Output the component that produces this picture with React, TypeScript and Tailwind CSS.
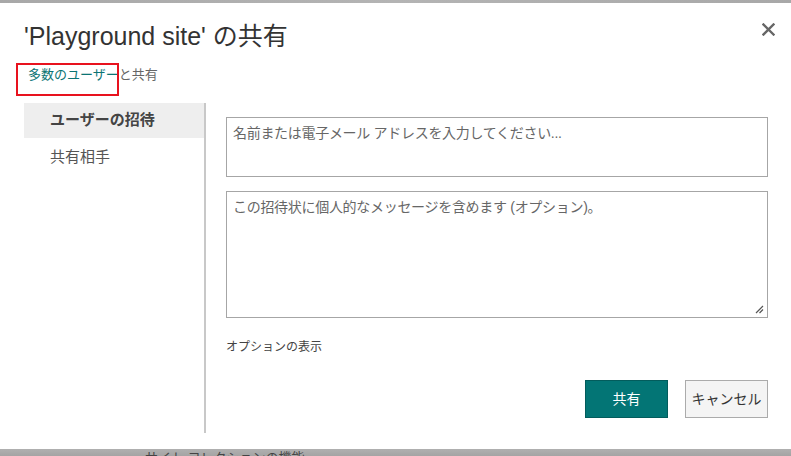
import React from 'react';

const font = { fontFamily: '"Liberation Sans", "Noto Sans CJK JP", sans-serif' };

const CloseIcon = () => (
  <svg width="13" height="13" viewBox="0 0 13 13" className="block">
    <path d="M1.5 1.5 L11.5 11.5 M11.5 1.5 L1.5 11.5" stroke="#666" strokeWidth="2.4" strokeLinecap="square" />
  </svg>
);

const ResizeGrip = () => (
  <svg width="10" height="10" viewBox="0 0 10 10" className="absolute right-[3px] bottom-[3px]">
    <path d="M9 2 L2 9 M9 5.5 L5.5 9" stroke="#555" strokeWidth="1.2" />
  </svg>
);

export default function App() {
  return (
    <div className="w-[791px] h-[456px] flex flex-col bg-[#ababab] overflow-hidden" style={font}>
      {/* backdrop strip above the dialog */}
      <div className="h-[3px] bg-gradient-to-r from-[#a8a8a8] via-[#b4b4b4] to-[#a8a8a8]" />

      <div className="relative h-[446px] bg-white flex flex-col">
        <button className="absolute right-[14px] top-[18px] p-[2px]">
          <CloseIcon />
        </button>

        <h1 className="pl-[24px] pt-[18px] text-[25px] leading-[30px] text-[#333]">'Playground site' の共有</h1>

        <div className="relative mt-[15px] pl-[28px] text-[13px] leading-[18px]">
          <span className="text-[#0b7474]">多数のユーザー</span>
          <span className="text-[#666]">と共有</span>
          {/* highlight frame around the link */}
          <div className="absolute left-[16px] top-[-3px] w-[103px] h-[33px] border-2 border-[#e8121e]" />
        </div>

        <div className="flex mt-[19px] h-[330px]">
          <nav className="w-[182px] ml-[24px] border-r-2 border-[#c8c8c8]">
            <div className="h-[35px] bg-[#eeeeee] flex items-center pl-[26px] text-[15px] font-bold text-[#444]">ユーザーの招待</div>
            <div className="h-[38px] flex items-center pl-[26px] text-[15px] text-[#555]">共有相手</div>
          </nav>

          <div className="w-[542px] ml-[20px] pt-[14px] flex flex-col">
            <div className="h-[60px] border border-[#a6a6a6] px-[6px] pt-[4px] text-[14px] leading-[22px] tracking-[-0.3px] text-[#666]">
              名前または電子メール アドレスを入力してください...
            </div>
            <div className="relative mt-[14px] h-[127px] border border-[#a6a6a6] px-[6px] pt-[4px] text-[14px] leading-[22px] tracking-[-0.3px] text-[#666]">
              この招待状に個人的なメッセージを含めます (オプション)。
              <ResizeGrip />
            </div>
            <div className="mt-[20px] text-[12px] leading-[18px] text-[#444]">オプションの表示</div>
            <div className="mt-[24px] flex justify-end gap-[17px]">
              <button className="w-[83px] h-[38px] bg-[#037575] border border-[#035c5c] text-white text-[14px]">共有</button>
              <button className="w-[83px] h-[38px] bg-[#f4f4f4] border border-[#ababab] text-[#333] text-[14px]">キャンセル</button>
            </div>
          </div>
        </div>
      </div>

      {/* page content peeking out below the dialog */}
      <div className="h-[7px] overflow-hidden bg-gradient-to-b from-[#b0b0b0] to-[#a4a4a4] pl-[145px] pt-[2px] text-[13px] leading-[14px] text-[#444]">
        サイト コレクションの機能
      </div>
    </div>
  );
}
